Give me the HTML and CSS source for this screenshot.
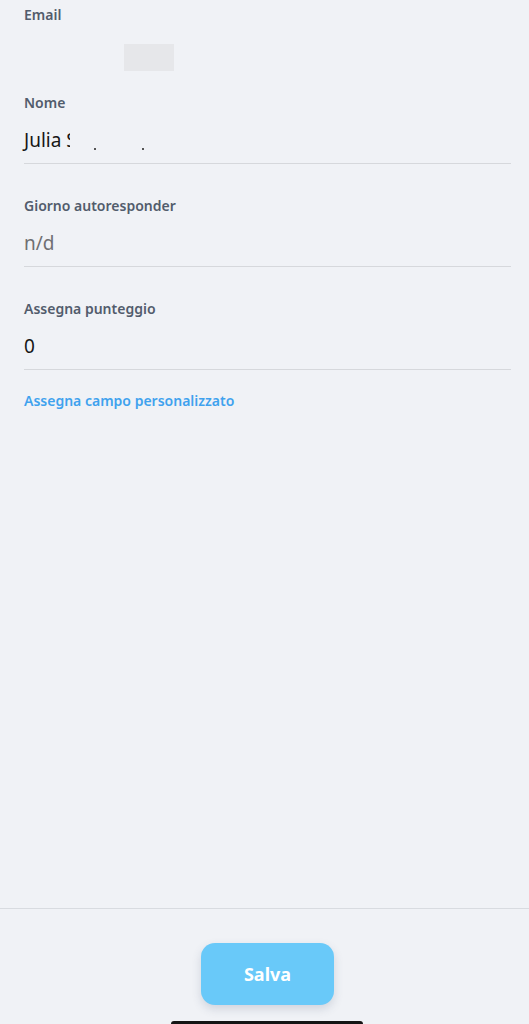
FILE: index.html
```html
<!DOCTYPE html>
<html lang="it">
<head>
<meta charset="utf-8">
<title>Contatto</title>
<link rel="stylesheet" href="styles.css">
</head>
<body>
<div class="page">
  <main class="form">
    <section class="field field-email">
      <div class="label">Email</div>
      <div class="redacted-box"></div>
    </section>
    <section class="field bordered">
      <div class="label">Nome</div>
      <div class="value name">Julia S<span class="redact"><i class="tick t1"></i><i class="tick t2"></i></span></div>
    </section>
    <section class="field bordered">
      <div class="label">Giorno autoresponder</div>
      <div class="value muted">n/d</div>
    </section>
    <section class="field bordered">
      <div class="label">Assegna punteggio</div>
      <div class="value">0</div>
    </section>
    <a class="link" href="#">Assegna campo personalizzato</a>
  </main>
  <footer class="footer">
    <button class="save" type="button">Salva</button>
    <div class="home-bar"></div>
  </footer>
</div>
</body>
</html>
```
FILE: styles.css
```css
html, body {
  margin: 0;
  padding: 0;
  background: #f0f2f6;
}
body {
  font-family: "Noto Sans", "Open Sans", "Liberation Sans", sans-serif;
}
.page {
  height: 1024px;
  display: flex;
  flex-direction: column;
  overflow: hidden;
}
.form {
  flex: 1;
  padding: 5px 18px 0 24px;
  display: flex;
  flex-direction: column;
}
.field {
  display: flex;
  flex-direction: column;
}
.label {
  font-size: 14px;
  line-height: 20px;
  font-weight: 600;
  color: #525c6c;
}
.redacted-box {
  margin: 19px 0 0 100px;
  width: 50px;
  height: 27px;
  background: #e6e7ea;
}
.field.bordered {
  border-bottom: 1px solid #d6d8dc;
  padding-bottom: 11px;
  margin-top: 22px;
}
.field.bordered + .field.bordered {
  margin-top: 32px;
}
.value {
  margin-top: 15px;
  font-size: 19px;
  line-height: 24px;
  color: #161616;
}
.value.muted {
  color: #6f6f72;
}
.name {
  position: relative;
  display: flex;
}
.redact {
  position: relative;
  width: 90px;
  height: 24px;
  margin-left: -7px;
  background: #f0f2f6;
}
.tick {
  position: absolute;
  top: 20px;
  width: 2px;
  height: 2px;
  background: #555;
}
.t1 { left: 24px; }
.t2 { left: 72px; }
.link {
  margin-top: 21px;
  font-size: 14px;
  line-height: 20px;
  font-weight: 600;
  color: #3fa2ee;
  text-decoration: none;
}
.footer {
  position: relative;
  height: 115px;
  border-top: 1px solid #d8dbe0;
  display: flex;
  justify-content: center;
  align-items: flex-start;
  padding-left: 6px;
}
.save {
  margin-top: 34px;
  width: 133px;
  height: 62px;
  border: none;
  border-radius: 14px;
  background: #69c9f9;
  color: #ffffff;
  font-family: "Noto Sans", "Open Sans", sans-serif;
  font-size: 18px;
  font-weight: 700;
  box-shadow: 0 4px 10px rgba(60, 80, 110, 0.18);
}
.home-bar {
  position: absolute;
  left: 171px;
  top: 112px;
  width: 192px;
  height: 6px;
  border-radius: 3px;
  background: #141414;
}
```
